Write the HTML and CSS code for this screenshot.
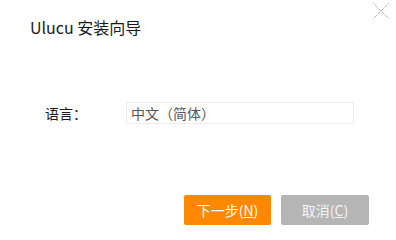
FILE: index.html
```html
<!DOCTYPE html>
<html lang="zh-CN">
  <head>
    <meta charset="UTF-8" />
    <title>Ulucu 安装向导</title>
    <link rel="stylesheet" href="styles.css">
  </head>
  <body>
    <div class="wizard">
      <!-- close -->
      <span class="close">
        <svg width="16" height="16" viewBox="0 0 16 16">
          <path d="M0.5 0.5 L15.5 15.5 M15.5 0.5 L0.5 15.5" stroke="#8a8a8a" stroke-width="1" stroke-dasharray="1 1" fill="none" />
        </svg>
      </span>
      <div class="title">Ulucu 安装向导</div>
      <!-- language -->
      <div class="row">
        <label class="label">语言：</label>
        <div class="select">中文（简体）</div>
      </div>
      <!-- buttons -->
      <div class="footer">
        <button class="btn next">下一步(<u>N</u>)</button>
        <button class="btn cancel">取消(<u>C</u>)</button>
      </div>
    </div>
  </body>
</html>
```

FILE: styles.css
```css
body {
  margin: 0;
  background: #fff;
  font-family: "Noto Sans CJK SC", "Noto Sans", sans-serif;
  color: #222;
}
.wizard {
  position: relative;
  width: 396px;
  height: 240px;
}
.close {
  position: absolute;
  top: 3px;
  right: 7px;
  width: 16px;
  height: 16px;
}
.close svg {
  display: block;
}
.title {
  padding: 16px 0 0 30px;
  font-size: 16px;
  line-height: 22px;
  color: #1a1a1a;
}
.row {
  display: flex;
  align-items: center;
  margin-top: 64px;
  padding-left: 45px;
}
.label {
  width: 81px;
  font-size: 14px;
  color: #1a1a1a;
}
.select {
  box-sizing: border-box;
  width: 228px;
  height: 22px;
  border: 1px solid #ececec;
  padding-left: 4px;
  font-size: 14px;
  line-height: 20px;
  color: #555;
}
.footer {
  display: flex;
  justify-content: flex-end;
  gap: 10px;
  margin-top: 71px;
  padding-right: 27px;
}
.btn {
  width: 88px;
  height: 30px;
  border: none;
  border-radius: 2px;
  font-family: inherit;
  font-size: 14px;
  color: #fff;
  padding: 0;
}
.btn.next {
  width: 87px;
  background: #ff8800;
}
.btn.cancel {
  background: #b5b5b5;
  color: #f4f4f4;
}
```
